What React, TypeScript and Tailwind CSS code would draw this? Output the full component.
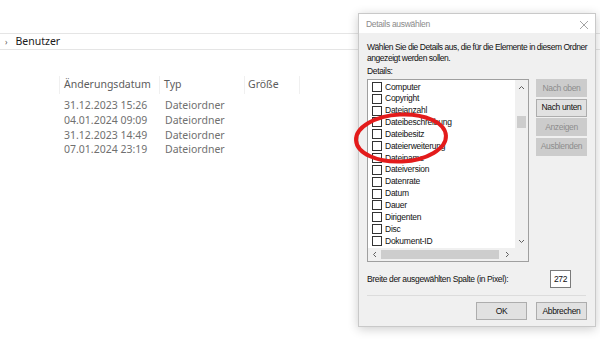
import React from 'react';

const items = [
  'Computer',
  'Copyright',
  'Dateianzahl',
  'Dateibeschreibung',
  'Dateibesitz',
  'Dateierweiterung',
  'Dateiname',
  'Dateiversion',
  'Datenrate',
  'Datum',
  'Dauer',
  'Dirigenten',
  'Disc',
  'Dokument-ID',
  'Dokumente',
];

const rows = [
  { date: '31.12.2023 15:26', type: 'Dateiordner' },
  { date: '04.01.2024 09:09', type: 'Dateiordner' },
  { date: '31.12.2023 14:49', type: 'Dateiordner' },
  { date: '07.01.2024 23:19', type: 'Dateiordner' },
];

function SideButton({ label, enabled }: { label: string; enabled?: boolean }) {
  return (
    <div
      className={
        enabled
          ? 'h-[18px] w-[51px] flex items-center justify-center whitespace-nowrap border border-[#adadad] bg-[#e1e1e1] text-[#111]'
          : 'h-[18px] w-[51px] flex items-center justify-center whitespace-nowrap border border-[#cccccc] bg-[#cccccc] text-[#8d8d8d]'
      }
    >
      {label}
    </div>
  );
}

export default function App() {
  return (
    <div className="relative w-[600px] h-[361px] overflow-hidden bg-white font-['Noto_Sans',sans-serif] text-[10px]">
      {/* Explorer background */}
      <div className="h-[33px]" />
      <div className="h-[17px] border-t border-b border-[#e5e5e5] flex items-center pl-[5px] gap-[8px] text-[#1a1a1a]">
        <span className="text-[8px] text-[#555]">›</span>
        <span className="text-[10.5px]">Benutzer</span>
      </div>
      <div className="h-[26px]" />
      <div className="flex h-[18px] items-center text-[#5c5c5c] text-[10.5px]">
        <div className="w-[60px] h-full border-r border-[#f0f0f0]" />
        <div className="w-[100px] h-full pl-[4px] flex items-center border-r border-[#f0f0f0]">Änderungsdatum</div>
        <div className="w-[85px] h-full pl-[4px] flex items-center border-r border-[#f0f0f0]">Typ</div>
        <div className="w-[55px] h-full pl-[3px] flex items-center border-r border-[#f0f0f0]">Größe</div>
      </div>
      <div className="flex flex-col pt-[5px] text-[#707070] text-[10.5px]">
        {rows.map((r, i) => (
          <div key={i} className="flex h-[14.6px] items-center">
            <div className="w-[64px]" />
            <div className="w-[101px]">{r.date}</div>
            <div>{r.type}</div>
          </div>
        ))}
      </div>

      {/* Dialog */}
      <div className="absolute left-[358px] top-[13px] w-[238px] h-[314px] bg-[#f0f0f0] border border-[#c9c9c9] shadow-[0_2px_10px_rgba(0,0,0,0.2)] flex flex-col text-[#111] font-['Liberation_Sans',sans-serif] text-[8.5px] tracking-[-0.35px]">
        <div className="h-[19px] bg-white flex items-center justify-between pl-[7px] pr-[6px]">
          <span className="text-[8.5px] tracking-[-0.3px] text-[#8a8a8a] mt-[2px]">Details auswählen</span>
          <svg width="10" height="10" viewBox="0 0 10 10" className="mt-[2px]">
            <path d="M1 1 L9 9 M9 1 L1 9" stroke="#9a9a9a" strokeWidth="0.9" />
          </svg>
        </div>
        <div className="flex flex-col px-[8px] pt-[9px]">
          <div className="leading-[11px] whitespace-nowrap tracking-[-0.45px]">
            Wählen Sie die Details aus, die für die Elemente in diesem Ordner
            <br />
            angezeigt werden sollen.
          </div>
          <div className="leading-[11px] mt-[2px]">Details:</div>
          <div className="flex gap-[7px] mt-[2px]">
            <div className="w-[163px] h-[183px] bg-white border border-[#9f9f9f] flex flex-col overflow-hidden">
              <div className="flex flex-1 overflow-hidden">
                <div className="flex-1 flex flex-col pt-[1px] pl-[4px] overflow-hidden">
                  {items.map((it) => (
                    <div key={it} className="h-[11.85px] shrink-0 flex items-center gap-[3px] tracking-[-0.25px]">
                      <div className="w-[10px] h-[10px] border border-[#333] bg-white shrink-0" />
                      <span>{it}</span>
                    </div>
                  ))}
                </div>
                <div className="w-[13px] flex flex-col items-center bg-[#f0f0f0]">
                  <div className="h-[14px] flex items-center justify-center">
                    <svg width="7" height="5" viewBox="0 0 7 5">
                      <path d="M1 4 L3.5 1.5 L6 4" stroke="#606060" fill="none" strokeWidth="1" />
                    </svg>
                  </div>
                  <div className="h-[22px]" />
                  <div className="w-[9px] h-[12px] bg-[#cdcdcd]" />
                  <div className="flex-1" />
                  <div className="h-[14px] flex items-center justify-center">
                    <svg width="7" height="5" viewBox="0 0 7 5">
                      <path d="M1 1 L3.5 3.5 L6 1" stroke="#606060" fill="none" strokeWidth="1" />
                    </svg>
                  </div>
                </div>
              </div>
              <div className="h-[13px] flex items-center bg-[#f0f0f0]">
                <div className="w-[13px] flex justify-center">
                  <svg width="5" height="7" viewBox="0 0 5 7">
                    <path d="M4 1 L1.5 3.5 L4 6" stroke="#606060" fill="none" strokeWidth="1" />
                  </svg>
                </div>
                <div className="w-[118px] h-[9px] bg-[#cdcdcd]" />
                <div className="w-[17px] flex justify-center">
                  <svg width="5" height="7" viewBox="0 0 5 7">
                    <path d="M1 1 L3.5 3.5 L1 6" stroke="#606060" fill="none" strokeWidth="1" />
                  </svg>
                </div>
                <div className="flex-1 h-full bg-[#f0f0f0]" />
              </div>
            </div>
            <div className="flex flex-col gap-[1.5px]">
              <SideButton label="Nach oben" />
              <SideButton label="Nach unten" enabled />
              <SideButton label="Anzeigen" />
              <SideButton label="Ausblenden" />
            </div>
          </div>
          <div className="flex items-center justify-between mt-[8px] pr-[16px]">
            <span>Breite der ausgewählten Spalte (in Pixel):</span>
            <div className="w-[21px] h-[18px] bg-white border border-[#7a7a7a] flex items-center justify-center">
              272
            </div>
          </div>
          <div className="h-px bg-[#dcdcdc] mt-[7px] mr-[1px]" />
          <div className="flex justify-end gap-[9px] mt-[6px]">
            <div className="w-[51px] h-[18px] flex items-center justify-center border border-[#adadad] bg-[#e1e1e1]">OK</div>
            <div className="w-[51px] h-[18px] flex items-center justify-center border border-[#adadad] bg-[#e1e1e1]">Abbrechen</div>
          </div>
        </div>
      </div>

      {/* Red marker ellipse */}
      <svg className="absolute left-[353px] top-[111px]" width="96" height="54" viewBox="0 0 96 54">
        <ellipse cx="48" cy="27" rx="45" ry="23.5" fill="none" stroke="#e31b1b" strokeWidth="4" transform="rotate(-3 48 27)" />
      </svg>
    </div>
  );
}
